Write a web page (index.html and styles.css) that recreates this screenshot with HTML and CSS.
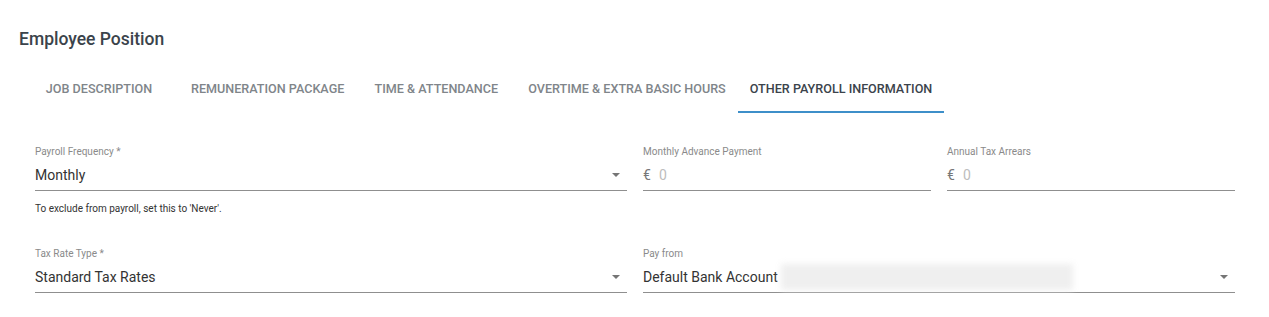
FILE: index.html
```html
<!DOCTYPE html>
<html lang="en">
<head>
    <meta charset="UTF-8">
    <meta name="viewport" content="width=device-width, initial-scale=1.0">
    <title>Employee Position</title>
    <link rel="stylesheet" href="styles.css">
</head>
<body>
    <div class="page">
        <h1>Employee Position</h1>
        <div class="tabs">
            <div class="tab">Job Description</div>
            <div class="tab">Remuneration Package</div>
            <div class="tab">Time &amp; Attendance</div>
            <div class="tab">Overtime &amp; Extra Basic Hours</div>
            <div class="tab active">Other Payroll Information</div>
        </div>

        <div class="form">
            <div class="field span-2">
                <label>Payroll Frequency *</label>
                <div class="control">
                    <span class="value">Monthly</span>
                    <span class="arrow"></span>
                </div>
                <div class="hint">To exclude from payroll, set this to 'Never'.</div>
            </div>
            <div class="field">
                <label>Monthly Advance Payment</label>
                <div class="control">
                    <span class="prefix">€</span>
                    <span class="placeholder">0</span>
                </div>
            </div>
            <div class="field">
                <label>Annual Tax Arrears</label>
                <div class="control">
                    <span class="prefix">€</span>
                    <span class="placeholder">0</span>
                </div>
            </div>

            <div class="field span-2">
                <label>Tax Rate Type *</label>
                <div class="control">
                    <span class="value">Standard Tax Rates</span>
                    <span class="arrow"></span>
                </div>
            </div>
            <div class="field span-2">
                <label>Pay from</label>
                <div class="control">
                    <span class="value">Default Bank Account</span>
                    <span class="blurred"></span>
                    <span class="arrow"></span>
                </div>
            </div>
        </div>
    </div>
</body>
</html>
```

FILE: styles.css
```css
body {
    margin: 0;
    font-family: Roboto, "Liberation Sans", sans-serif;
    background: #ffffff;
    color: #333;
}
.page {
    padding: 29px 19px 0 19px;
}
h1 {
    margin: 0;
    font-size: 17.5px;
    font-weight: 500;
    color: #3b434b;
    line-height: 20px;
}
.tabs {
    display: flex;
    margin-top: 16px;
}
.tab {
    min-width: 160px;
    box-sizing: border-box;
    padding: 0 12px;
    height: 48px;
    display: flex;
    align-items: center;
    justify-content: center;
    font-size: 12.6px;
    font-weight: 500;
    text-transform: uppercase;
    color: #80858a;
    border-bottom: 2px solid transparent;
}
.tab.active {
    color: #3b434b;
    border-bottom-color: #3d8fc9;
}
.form {
    display: grid;
    grid-template-columns: repeat(4, 288px);
    column-gap: 16px;
    row-gap: 31px;
    padding: 32px 16px 0 16px;
}
.span-2 {
    grid-column: span 2;
}
.field label {
    display: block;
    font-size: 10px;
    color: #8a8a8a;
    line-height: 14px;
}
.control {
    display: flex;
    align-items: center;
    height: 30px;
    border-bottom: 1px solid #8f8f8f;
    font-size: 14px;
    margin-top: 1px;
}
.value {
    color: #333;
}
.prefix {
    color: #777;
    margin-right: 8px;
}
.placeholder {
    color: #bdbdbd;
}
.arrow {
    margin-left: auto;
    margin-right: 7px;
    width: 0;
    height: 0;
    border-left: 4.5px solid transparent;
    border-right: 4.5px solid transparent;
    border-top: 4.5px solid #757575;
}
.blurred {
    width: 292px;
    height: 26px;
    margin-left: 3px;
    background: #efefef;
    filter: blur(3px);
}
.hint {
    font-size: 10px;
    color: #333;
    margin-top: 11px;
    line-height: 14px;
}
```
